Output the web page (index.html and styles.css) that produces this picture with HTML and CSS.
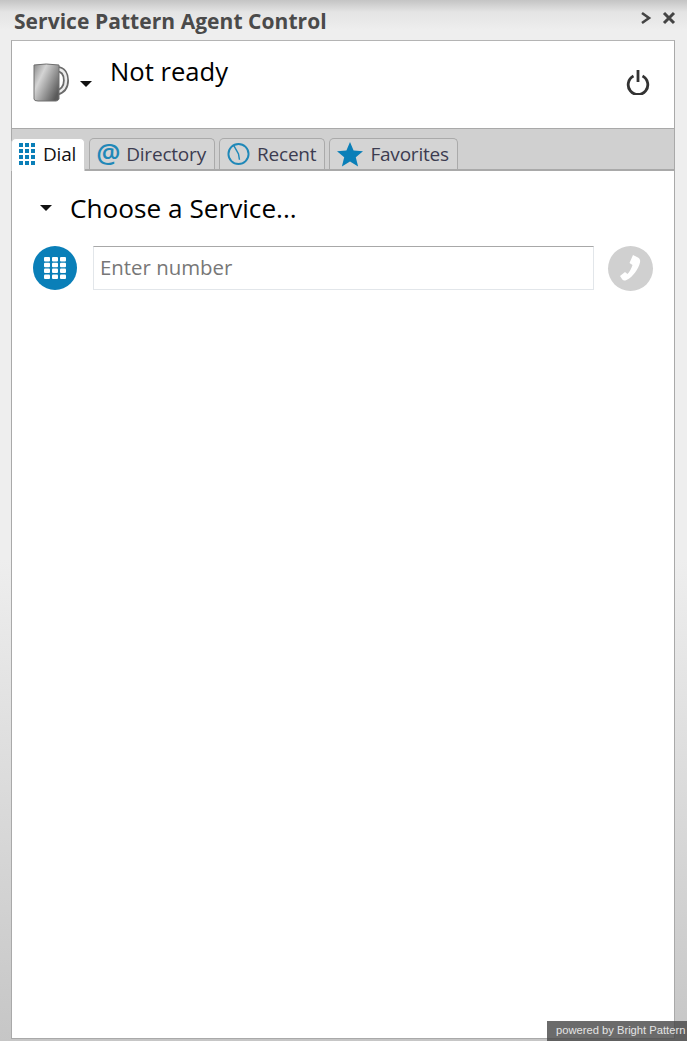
FILE: index.html
```html
<!DOCTYPE html>
<html lang="en">
<head>
    <meta charset="UTF-8">
    <meta name="viewport" content="width=device-width, initial-scale=1.0">
    <title>Service Pattern Agent Control</title>
    <link rel="stylesheet" href="styles.css">
</head>
<body>

<div class="titlebar">
    <h1>Service Pattern Agent Control</h1>
    <div class="window-buttons">
        <svg width="12" height="14" viewBox="0 0 12 14"><path d="M2 2l7 5-7 5" fill="none" stroke="#444" stroke-width="2.600"/></svg>
        <svg width="14" height="14" viewBox="0 0 14 14"><path d="M2 2l10 10M12 2L2 12" fill="none" stroke="#444" stroke-width="3"/></svg>
    </div>
</div>

<div class="panel">
    <div class="status">
        <svg class="mug" width="38" height="40" viewBox="0 0 38 40">
            <defs>
                <linearGradient id="mugFill" x1="0" y1="0" x2="1" y2="0.7">
                    <stop offset="0" stop-color="#8a8a8a"/>
                    <stop offset="0.35" stop-color="#d4d4d4"/>
                    <stop offset="1" stop-color="#5a5a5a"/>
                </linearGradient>
            </defs>
            <path d="M23 6C31 6 33 12 33 17.500S31 28 23 30" fill="none" stroke="#6a6a6a" stroke-width="6"/>
            <path d="M23 6C31 6 33 12 33 17.500S31 28 23 30" fill="none" stroke="#ececec" stroke-width="2.500"/>
            <path d="M1 2q12-2 25 0v34q-1 2-3 2H5q-4 0-4-2z" fill="url(#mugFill)" stroke="#707070"/>
        </svg>
        <span class="caret status-caret"></span>
        <span class="status-text">Not ready</span>
        <svg class="power" width="24" height="26" viewBox="0 0 24 26">
            <path d="M7.500 7a9.800 9.800 0 1 0 9 0" fill="none" stroke="#333" stroke-width="2.800"/>
            <path d="M12 1v12" fill="none" stroke="#333" stroke-width="2.800"/>
        </svg>
    </div>

    <div class="tabs">
        <div class="tab active">
            <svg width="17" height="22" viewBox="0 0 17 22" class="tab-icon">
                <g fill="#0a7fb8">
                    <rect x="0" y="0" width="4" height="4"/><rect x="6" y="0" width="4" height="4"/><rect x="12" y="0" width="4" height="4"/>
                    <rect x="0" y="6" width="4" height="4"/><rect x="6" y="6" width="4" height="4"/><rect x="12" y="6" width="4" height="4"/>
                    <rect x="0" y="12" width="4" height="4"/><rect x="6" y="12" width="4" height="4"/><rect x="12" y="12" width="4" height="4"/>
                    <rect x="0" y="18" width="4" height="4"/><rect x="6" y="18" width="4" height="4"/><rect x="12" y="18" width="4" height="4"/>
                </g>
            </svg>
            Dial
        </div>
        <div class="tab">
            <span class="at-icon">@</span>
            Directory
        </div>
        <div class="tab">
            <svg width="23" height="24" viewBox="0 0 24 24" class="tab-icon">
                <circle cx="12" cy="12" r="10.500" fill="none" stroke="#1f88b8" stroke-width="2"/>
                <path d="M7 3l5 9 1 6" fill="none" stroke="#1f88b8" stroke-width="1.500"/>
            </svg>
            Recent
        </div>
        <div class="tab">
            <svg width="26" height="25" viewBox="0 0 26 25" class="tab-icon">
                <path d="M13 0l3.600 8.600 9.400.7-7.200 6 2.300 9.200L13 19.600 4.900 24.500l2.300-9.200-7.200-6 9.400-.7z" fill="#0a7fb8"/>
            </svg>
            Favorites
        </div>
    </div>

    <div class="content">
        <div class="service">
            <span class="caret"></span>
            <span class="service-text">Choose a Service...</span>
        </div>
        <div class="dial-row">
            <div class="round-btn keypad">
                <svg width="22" height="22" viewBox="0 0 22 22">
                    <g fill="#fff">
                        <rect x="0" y="0" width="6" height="4.500" rx="1"/><rect x="8" y="0" width="6" height="4.500" rx="1"/><rect x="16" y="0" width="6" height="4.500" rx="1"/>
                        <rect x="0" y="5.800" width="6" height="4.500" rx="1"/><rect x="8" y="5.800" width="6" height="4.500" rx="1"/><rect x="16" y="5.800" width="6" height="4.500" rx="1"/>
                        <rect x="0" y="11.600" width="6" height="4.500" rx="1"/><rect x="8" y="11.600" width="6" height="4.500" rx="1"/><rect x="16" y="11.600" width="6" height="4.500" rx="1"/>
                        <rect x="0" y="17.500" width="6" height="4.500" rx="1"/><rect x="8" y="17.500" width="6" height="4.500" rx="1"/><rect x="16" y="17.500" width="6" height="4.500" rx="1"/>
                    </g>
                </svg>
            </div>
            <input class="number" type="text" placeholder="Enter number">
            <div class="round-btn call">
                <svg class="phone" width="22" height="27" viewBox="0 0 22 27">
                    <path d="M13 1l5 2.500c2 1 2.500 3 2 5C18.500 15 13 23 6.500 26c-2 1-3.500.5-4.500-1L0 22l5-4 2.500 2c2-2 4-6 5-9L9.500 9z" fill="#fff"/>
                </svg>
            </div>
        </div>
    </div>
</div>

<div class="powered">powered by Bright Pattern</div>

</body>
</html>
```

FILE: styles.css
```css
html, body {
    height: 100%;
}
body {
    margin: 0;
    height: 1041px;
    overflow: hidden;
    position: relative;
    box-sizing: border-box;
    padding: 0 12px 2px 11px;
    display: flex;
    flex-direction: column;
    font-family: "Open Sans", "Noto Sans", sans-serif;
    background: linear-gradient(#c4c4c4 0, #e4e4e4 12px, #eeeeee 30px, #eeeeee 560px, #c6c6c6 100%);
}
.titlebar {
    height: 40px;
    flex: none;
    display: flex;
    justify-content: space-between;
    align-items: center;
    padding: 2px 0 0 3px;
    box-sizing: border-box;
}
.titlebar h1 {
    margin: 0;
    font-size: 21px;
    letter-spacing: 0.05px;
    font-weight: 700;
    color: #4a4a4a;
    margin-bottom: 1px;
}
.window-buttons {
    display: flex;
    align-items: center;
    gap: 10px;
    margin-bottom: 6px;
    margin-right: -1px;
}
.panel {
    flex: 1;
    display: flex;
    flex-direction: column;
    border: 1px solid #a9a9a9;
    border-top-color: #b4b4b4;
    background: #fff;
}
.status {
    height: 87px;
    flex: none;
    display: flex;
    align-items: flex-start;
    box-sizing: border-box;
    padding: 22px 23px 0 21px;
}
.caret {
    display: inline-block;
    width: 0;
    height: 0;
    border-left: 6.5px solid transparent;
    border-right: 6.5px solid transparent;
    border-top: 6px solid #111;
}
.status-caret {
    margin: 18px 0 0 9px;
}
.status-text {
    margin-left: 18px;
    margin-top: -9px;
    font-size: 25.6px;
    color: #000;
}
.power {
    margin-left: auto;
    margin-top: 6px;
    margin-right: 1px;
}
.tabs {
    height: 43px;
    flex: none;
    box-sizing: border-box;
    display: flex;
    align-items: flex-end;
    gap: 4px;
    background: #d0d0d0;
    border-top: 1px solid #a9a9a9;
    border-bottom: 2px solid #a9a9a9;
}
.tab {
    height: 31px;
    box-sizing: border-box;
    display: flex;
    align-items: center;
    gap: 7px;
    padding: 0 8px 0 7px;
    border: 1px solid #aaa;
    border-bottom: none;
    border-radius: 5px 5px 0 0;
    font-size: 19px;
    letter-spacing: -0.2px;
    color: #3c3c50;
    background: #d4d4d4;
}
.tab.active {
    background: #fff;
    border-color: #d0d0d0;
    color: #111;
    height: 33px;
    margin-bottom: -2px;
    margin-left: -1px;
    padding-bottom: 2px;
}
.at-icon {
    font-size: 27px;
    font-weight: 600;
    line-height: 1;
    color: #1f88b8;
    margin: -4px -1px 0 -1px;
}
.content {
    flex: 1;
    padding: 17px 21px 0 21px;
}
.service {
    display: flex;
    align-items: center;
    height: 40px;
    margin-bottom: 18px;
    padding-left: 7px;
}
.service .caret {
    margin-top: -1px;
}
.service-text {
    margin-left: 18px;
    font-size: 26.200px;
    color: #000;
}
.dial-row {
    display: flex;
    align-items: flex-start;
}
.round-btn {
    width: 45px;
    height: 45px;
    flex: none;
    border-radius: 50%;
    display: flex;
    align-items: center;
    justify-content: center;
}
.keypad {
    background: #0a7fb8;
    width: 44px;
    height: 44px;
}
.call {
    background: #d0d0d0;
}
.phone {
    margin: -3px 0 0 1px;
}
.number {
    width: 501px;
    height: 44px;
    flex: none;
    box-sizing: border-box;
    margin: 0 14px 0 16px;
    padding: 0 6px 2px;
    border: 1px solid #e2e6ea;
    border-top-color: #a8a8a8;
    outline: none;
    font-family: inherit;
    font-size: 20.4px;
}
.number::placeholder {
    color: #777;
    opacity: 1;
}
.powered {
    position: absolute;
    right: 0;
    bottom: 0;
    width: 140px;
    height: 20px;
    box-sizing: border-box;
    padding-left: 9px;
    line-height: 18px;
    font-family: "Liberation Sans", sans-serif;
    font-size: 11.2px;
    color: #e4e4e4;
    background: rgba(70, 70, 70, 0.8);
    white-space: nowrap;
}
```
